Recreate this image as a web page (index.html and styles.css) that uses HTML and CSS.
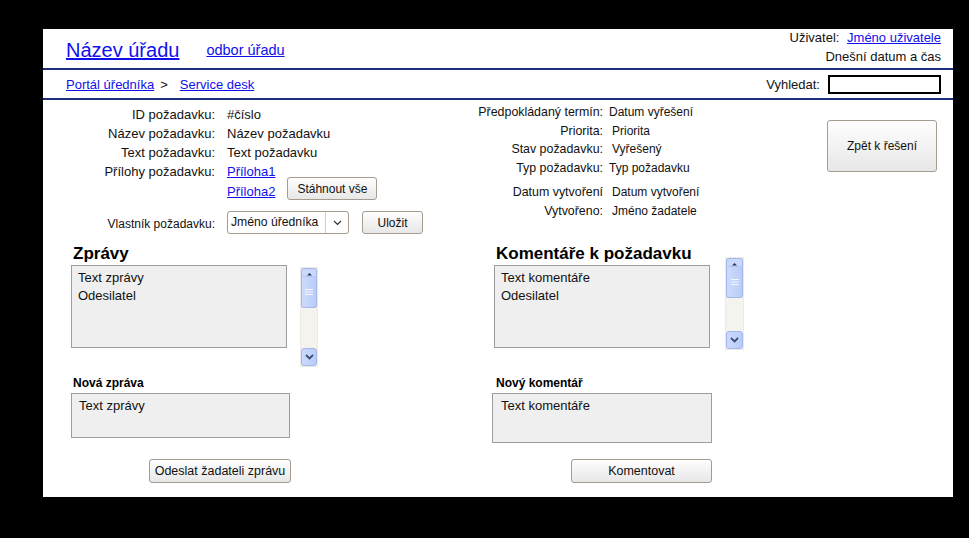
FILE: index.html
```html
<!DOCTYPE html>
<html lang="cs">
<head>
<meta charset="utf-8">
<title>Service desk</title>
<link rel="stylesheet" href="styles.css">
</head>
<body>
<div class="page">
  <header class="masthead">
    <div class="brand">
      <a href="#" class="brand-title">Název úřadu</a>
      <a href="#" class="brand-dept">odbor úřadu</a>
    </div>
    <div class="session">
      <div>Uživatel: <a href="#" class="user-link">Jméno uživatele</a></div>
      <div>Dnešní datum a čas</div>
    </div>
  </header>

  <nav class="crumbs">
    <div class="trail">
      <a href="#">Portál úředníka</a><span class="sep">&gt;</span><a href="#">Service desk</a>
    </div>
    <label class="search">Vyhledat: <input type="text" class="search-input"></label>
  </nav>

  <main class="content">
    <section class="summary">
      <div class="request-form">
        <div class="field"><span class="field-label">ID požadavku:</span><span class="field-value">#číslo</span></div>
        <div class="field"><span class="field-label">Název požadavku:</span><span class="field-value">Název požadavku</span></div>
        <div class="field"><span class="field-label">Text požadavku:</span><span class="field-value">Text požadavku</span></div>
        <div class="field field-attach">
          <span class="field-label">Přílohy požadavku:</span>
          <div class="attachments">
            <div class="attach-links">
              <a href="#">Příloha1</a>
              <a href="#">Příloha2</a>
            </div>
            <button class="btn btn-download">Stáhnout vše</button>
          </div>
        </div>
        <div class="field field-owner">
          <span class="field-label">Vlastník požadavku:</span>
          <div class="select">
            <span class="select-value">Jméno úředníka</span>
            <span class="select-arrow"><svg width="9" height="6" viewBox="0 0 9 6"><path d="M1 1 L4.5 4.5 L8 1" fill="none" stroke="#333" stroke-width="1.2"/></svg></span>
          </div>
          <button class="btn btn-save">Uložit</button>
        </div>
      </div>

      <dl class="meta">
        <dt>Předpokládaný termín:</dt><dd>Datum vyřešení</dd>
        <dt>Priorita:</dt><dd class="shift">Priorita</dd>
        <dt>Stav požadavku:</dt><dd class="shift">Vyřešený</dd>
        <dt>Typ požadavku:</dt><dd>Typ požadavku</dd>
        <dt class="gap">Datum vytvoření</dt><dd class="gap shift">Datum vytvoření</dd>
        <dt>Vytvořeno:</dt><dd class="shift">Jméno žadatele</dd>
      </dl>

      <button class="btn btn-back">Zpět k řešení</button>
    </section>

    <section class="threads">
      <h2 class="thread-title">Zprávy</h2>
      <h2 class="thread-title">Komentáře k požadavku</h2>

      <div class="thread-row">
        <div class="list-box">
          <div>Text zprávy</div>
          <div>Odesilatel</div>
        </div>
        <div class="scrollbar scrollbar-left">
          <div class="sb-up"><svg width="7" height="4" viewBox="0 0 7 4"><path d="M1 3.5 L3.5 1 L6 3.5Z" fill="#2b3550"/></svg></div>
          <div class="sb-thumb"><svg width="8" height="7" viewBox="0 0 8 7"><path d="M0 0.5H8M0 3H8M0 5.5H8" stroke="#f4f7ff" stroke-width="1"/></svg></div>
          <div class="sb-track"></div>
          <div class="sb-down"><svg width="9" height="6" viewBox="0 0 9 6"><path d="M1 1 L4.5 4.5 L8 1" fill="none" stroke="#3d4d72" stroke-width="1.8"/></svg></div>
        </div>
      </div>
      <div class="thread-row">
        <div class="list-box">
          <div>Text komentáře</div>
          <div>Odesilatel</div>
        </div>
        <div class="scrollbar scrollbar-right">
          <div class="sb-up"><svg width="7" height="4" viewBox="0 0 7 4"><path d="M1 3.5 L3.5 1 L6 3.5Z" fill="#2b3550"/></svg></div>
          <div class="sb-thumb"><svg width="8" height="7" viewBox="0 0 8 7"><path d="M0 0.5H8M0 3H8M0 5.5H8" stroke="#f4f7ff" stroke-width="1"/></svg></div>
          <div class="sb-track"></div>
          <div class="sb-down"><svg width="9" height="6" viewBox="0 0 9 6"><path d="M1 1 L4.5 4.5 L8 1" fill="none" stroke="#3d4d72" stroke-width="1.8"/></svg></div>
        </div>
      </div>

      <h3 class="new-title">Nová zpráva</h3>
      <h3 class="new-title">Nový komentář</h3>

      <div class="new-box new-box-left">Text zprávy</div>
      <div class="new-box new-box-right">Text komentáře</div>

      <div class="action-row action-left"><button class="btn btn-send">Odeslat žadateli zprávu</button></div>
      <div class="action-row action-right"><button class="btn btn-comment">Komentovat</button></div>
    </section>
  </main>
</div>
</body>
</html>
```

FILE: styles.css
```css
* { box-sizing: border-box; }

body {
  margin: 0;
  background: #000;
  font-family: "Liberation Sans", Arial, sans-serif;
  color: #111;
}

a { color: #1010ec; }

.page {
  margin: 29px 0 0 43px;
  width: 910px;
  height: 468px;
  background: #fff;
}

/* header */
.masthead {
  height: 41px;
  border-bottom: 2px solid #1f2e7c;
  display: flex;
  justify-content: space-between;
  padding: 0 12px 0 23px;
}

.brand {
  display: flex;
  align-items: flex-start;
  gap: 27px;
  padding-top: 9px;
}

.brand-title {
  font-size: 20px;
  line-height: 24px;
}

.brand-dept {
  font-size: 14.5px;
  line-height: 17px;
  padding-top: 3.5px;
}

.session {
  display: flex;
  flex-direction: column;
  gap: 3px;
  padding-top: 1px;
  text-align: right;
  font-size: 13px;
  line-height: 16px;
}

.user-link { margin-left: 4px; }

/* breadcrumbs */
.crumbs {
  height: 30px;
  border-bottom: 2px solid #1f2e7c;
  display: flex;
  align-items: center;
  justify-content: space-between;
  padding: 0 12px 0 23px;
  font-size: 13px;
}

.sep {
  margin: 0 12px 0 6px;
}

.search {
  display: flex;
  align-items: center;
  gap: 8px;
}

.search-input {
  width: 113px;
  height: 19px;
  border: 2px solid #000;
  margin: 0;
  padding: 0;
}

/* summary */
.summary {
  display: flex;
  align-items: flex-start;
}

.request-form {
  width: 397px;
  margin-top: 5px;
  font-size: 13px;
  line-height: 19px;
}

.field {
  display: flex;
  align-items: flex-start;
  gap: 12px;
}

.field-label {
  width: 172px;
  flex: none;
  text-align: right;
}

.field-attach { line-height: 20px; }

.attachments {
  display: flex;
  align-items: flex-end;
  gap: 12px;
}

.attach-links {
  display: flex;
  flex-direction: column;
}

.btn {
  font-family: "Liberation Sans", Arial, sans-serif;
  font-size: 12px;
  color: #111;
  border: 1px solid #a59b8f;
  border-radius: 3px;
  background: linear-gradient(#fefefe, #e7e7e7);
  padding: 0;
  margin: 0;
}

.btn-download {
  width: 90px;
  height: 23px;
  margin-bottom: 2px;
}

.field-owner {
  margin-top: 9px;
  align-items: center;
  height: 23px;
}

.field-owner .field-label {
  padding-top: 3px;
  font-size: 12px;
}

.select {
  width: 122px;
  height: 23px;
  border: 1px solid #a59b8f;
  border-radius: 3px;
  display: flex;
  background: #fff;
}

.select-value {
  flex: 1;
  padding-left: 3px;
  font-size: 12.2px;
  line-height: 21px;
  white-space: nowrap;
  overflow: hidden;
}

.select-arrow {
  width: 23px;
  flex: none;
  border-left: 1px solid #d4cfc8;
  display: flex;
  align-items: center;
  justify-content: center;
}

.btn-save {
  width: 61px;
  height: 23px;
  margin-left: 1px;
}

.meta {
  margin: 3px 0 0;
  display: grid;
  grid-template-columns: 163px auto;
  column-gap: 6px;
  font-size: 12px;
  line-height: 18.5px;
}

.meta dt {
  text-align: right;
  font-size: 12.4px;
}
.meta dd { margin: 0; }
.meta .shift { padding-left: 3px; }
.meta .gap { margin-top: 6px; }

.btn-back {
  width: 110px;
  height: 52px;
  margin: 20px 16px 0 auto;
}

/* threads */
.threads {
  margin-top: 10px;
  padding-left: 28px;
  display: grid;
  grid-template-columns: 423px 1fr;
}

.thread-title {
  margin: 0 0 1px;
  padding-left: 2px;
  font-size: 17px;
  line-height: 20px;
  font-weight: bold;
  color: #000;
}

.thread-row {
  display: flex;
  align-items: flex-start;
}

.list-box {
  width: 216px;
  height: 83px;
  border: 1px solid #9d9d9d;
  background: #efefef;
  padding: 3px 6px;
  font-size: 13px;
  line-height: 18px;
}

.scrollbar {
  width: 18px;
  display: flex;
  flex-direction: column;
  background: #f4f3ee;
  border: 1px solid #ecebe6;
}

.scrollbar-left {
  height: 100px;
  margin: 2px 0 0 13px;
}

.scrollbar-right {
  width: 19px;
  height: 93px;
  margin: -8px 0 0 15px;
}

.sb-up {
  height: 8px;
  background: #c9d8fc;
  border: 1px solid #a3b7ec;
  border-bottom: none;
  border-radius: 3px 3px 0 0;
  display: flex;
  justify-content: center;
  align-items: flex-end;
}

.sb-thumb {
  height: 32px;
  background: linear-gradient(90deg, #cddbfd, #b9ccf8);
  border: 1px solid #a3b7ec;
  border-top: 1px solid #b4c6f2;
  border-radius: 0 0 3px 3px;
  display: flex;
  justify-content: center;
  align-items: center;
}

.sb-track { flex: 1; }

.sb-down {
  height: 18px;
  background: linear-gradient(90deg, #cbd9fd, #b9ccf8);
  border: 1px solid #a3b7ec;
  border-radius: 3px;
  display: flex;
  justify-content: center;
  align-items: center;
}

.new-title {
  margin: 8px 0 2px;
  padding-left: 2px;
  font-size: 12px;
  line-height: 16px;
  font-weight: bold;
  color: #000;
}

.new-box {
  border: 1px solid #9d9d9d;
  background: #efefef;
  padding: 3px 7px;
  font-size: 13px;
  line-height: 18px;
}

.new-box-left {
  width: 219px;
  height: 45px;
}

.new-box-right {
  width: 220px;
  height: 50px;
  margin-left: -2px;
  padding-left: 8px;
}

.action-row {
  margin-top: 16px;
  display: flex;
  justify-content: flex-end;
  align-self: start;
}

.action-left { width: 220px; }
.action-right { width: 220px; margin-left: -2px; }

.btn-send {
  width: 142px;
  height: 24px;
  font-size: 12.5px;
}

.btn-comment {
  width: 141px;
  height: 24px;
  font-size: 12.5px;
}
```
